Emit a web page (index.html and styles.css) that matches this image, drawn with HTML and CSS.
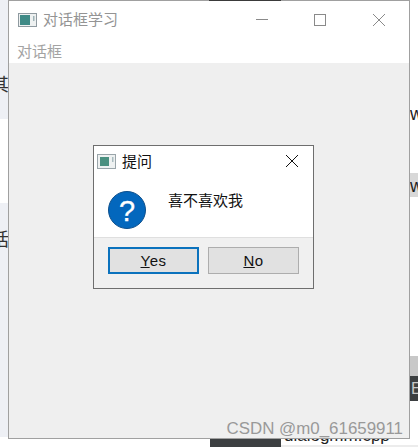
FILE: index.html
```html
<!DOCTYPE html>
<html lang="zh">
<head>
<meta charset="utf-8">
<title>对话框学习</title>
<link rel="stylesheet" href="styles.css">
</head>
<body>
<div class="desk">
  <div class="bg-band bg-left-top"></div>
  <div class="bg-band bg-left-bottom"></div>
  <span class="bg-text bg-char-a">其</span>
  <span class="bg-text bg-char-b">话</span>
  <div class="bg-band bg-top-dark"></div>
  <div class="bg-band bg-right-grey"></div>
  <div class="bg-band bg-right-mid"></div>
  <div class="bg-band bg-right-dark"></div>
  <span class="bg-text bg-e">E</span>
  <span class="bg-text bg-w1">w</span>
  <span class="bg-text bg-w2">w</span>
  <div class="bg-band bg-bottom-dark"></div>
  <div class="bg-band bg-bottom-line"></div>
  <span class="bg-text bg-file">dialogmm.cpp</span>

  <main class="window">
    <header class="titlebar">
      <svg class="app-icon" width="19" height="14" viewBox="0 0 19 14"><rect x="0.5" y="0.5" width="18" height="13" fill="#eef1f1" stroke="#8f9aa0"/><rect x="2" y="2" width="10" height="10" fill="#3f8a86"/><rect x="15" y="3" width="1.5" height="5" fill="#9fb4b8"/></svg>
      <span class="window-title">对话框学习</span>
      <div class="caption">
        <svg class="cap-btn" width="18" height="14" viewBox="0 0 18 14"><path d="M3 6.5h12" stroke="#8a8a8a" fill="none"/></svg>
        <svg class="cap-btn" width="14" height="14" viewBox="0 0 14 14"><rect x="1.5" y="1.5" width="11" height="11" fill="none" stroke="#8a8a8a"/></svg>
        <svg class="cap-btn" width="17" height="14" viewBox="0 0 17 14"><path d="M4 1l12 12M16 1L4 13" stroke="#8a8a8a" fill="none"/></svg>
      </div>
    </header>
    <nav class="menubar">对话框</nav>
    <section class="client">
      <div class="dialog">
        <header class="dlg-title">
          <svg class="app-icon" width="19" height="15" viewBox="0 0 19 15"><rect x="0.5" y="0.5" width="18" height="14" fill="#eef1f1" stroke="#9aa5aa"/><rect x="3" y="3" width="9" height="9" fill="#4a9080"/><rect x="15" y="3" width="1.5" height="5" fill="#a9bcc0"/></svg>
          <span class="dlg-name">提问</span>
          <svg class="dlg-close" width="14" height="14" viewBox="0 0 14 14"><path d="M1 1l12 12M13 1L1 13" stroke="#111" fill="none"/></svg>
        </header>
        <div class="dlg-body">
          <svg class="q-icon" width="38" height="38" viewBox="0 0 38 38"><circle cx="19" cy="19" r="18.5" fill="#0367bd" stroke="#0d4f8c"/><text x="19" y="29.500" text-anchor="middle" class="q-mark">?</text></svg>
          <p class="dlg-text">喜不喜欢我</p>
        </div>
        <footer class="dlg-foot">
          <button class="btn btn-default"><u>Y</u>es</button>
          <button class="btn"><u>N</u>o</button>
        </footer>
      </div>
    </section>
  </main>
  <span class="watermark">CSDN @m0_61659911</span>
</div>
</body>
</html>
```
FILE: styles.css
```css
html, body { margin: 0; padding: 0; }
body { width: 418px; height: 447px; overflow: hidden; background: #fff; font-family: "Noto Sans CJK SC", "Liberation Sans", sans-serif; }
.desk { position: relative; width: 418px; height: 447px; overflow: hidden; background: #fff; }
.bg-band { position: absolute; }
.bg-left-top { left: 0; top: 0; width: 8px; height: 119px; background: #eef0f5; }
.bg-left-bottom { left: 0; top: 203px; width: 8px; height: 234px; background: #eef0f5; }
.bg-top-dark { left: 209px; top: 0; width: 72px; height: 1px; background: #3a3a3a; z-index: 2; }
.bg-right-grey { left: 410px; top: 173px; width: 8px; height: 24px; background: #d8d8d8; }
.bg-right-mid { left: 410px; top: 356px; width: 8px; height: 20px; background: #c8c8c8; }
.bg-right-dark { left: 410px; top: 376px; width: 8px; height: 25px; background: #3c3f41; }
.bg-bottom-dark { left: 210px; top: 439px; width: 71px; height: 8px; background: #3c3f41; }
.bg-bottom-line { left: 281px; top: 445px; width: 137px; height: 2px; background: #ececec; }
.bg-text { position: absolute; color: #333; }
.bg-char-a { left: -9px; top: 71px; font-size: 18px; line-height: 24px; }
.bg-char-b { left: -9px; top: 226px; font-size: 18px; line-height: 24px; }
.bg-w1 { left: 410px; top: 104px; font: 18px/20px "Liberation Sans", sans-serif; color: #222; }
.bg-w2 { left: 410px; top: 176px; font: 18px/20px "Liberation Sans", sans-serif; color: #222; }
.bg-e { left: 411px; top: 379px; font: 16px/20px "Liberation Sans", sans-serif; color: #c8c8c8; }
.bg-file { left: 284px; top: 425px; font: 17px/22px "Liberation Sans", sans-serif; color: #222; }
.window { position: absolute; left: 8px; top: 0; width: 400px; height: 437px; display: flex; flex-direction: column; background: #fff; border: 1px solid #a0a0a0; z-index: 1; }
.titlebar { height: 37px; flex: none; display: flex; align-items: center; padding: 0 0 0 9px; box-sizing: border-box; }
.app-icon { flex: none; }
.window-title { margin-left: 6px; font-size: 15px; line-height: 20px; margin-top: -2px; color: #949494; }
.caption { margin-left: auto; display: flex; align-items: center; gap: 42px; padding-right: 23px; }
.cap-btn { display: block; }
.menubar { height: 25px; flex: none; box-sizing: border-box; padding-left: 8px; font-size: 15px; line-height: 25px; color: #a3a3a3; }
.client { flex: 1; background: #efefef; position: relative; }
.dialog { position: absolute; left: 84px; top: 82px; width: 219px; height: 142px; display: flex; flex-direction: column; background: #fff; border: 1px solid #6e6e6e; }
.dlg-title { height: 30px; flex: none; display: flex; align-items: center; padding: 0 14px 0 3px; box-sizing: border-box; }
.dlg-name { margin-left: 6px; font-size: 15px; line-height: 20px; color: #111; }
.dlg-close { margin-left: auto; }
.dlg-body { flex: 1; display: flex; align-items: flex-start; padding: 15px 0 0 14px; }
.q-icon { flex: none; }
.q-mark { font: 29px "Liberation Sans", sans-serif; fill: #fff; stroke: #fff; stroke-width: 0.3px; }
.dlg-text { margin: -1px 0 0 22px; font-size: 15px; line-height: 20px; color: #111; }
.dlg-foot { height: 51px; flex: none; display: flex; gap: 9px; align-items: flex-start; box-sizing: border-box; padding: 9px 0 0 14px; background: #f0f0f0; border-top: 1px solid #dfdfdf; }
.btn { width: 91px; height: 27px; padding: 0; background: #e1e1e1; border: 1px solid #adadad; color: #111; font: 15px "Liberation Sans", sans-serif; letter-spacing: 0.5px; }
.btn-default { border: 2px solid #0b72bd; }
.watermark { position: absolute; right: 15px; top: 419px; z-index: 2; font: 16.9px/20px "Liberation Sans", sans-serif; color: #999; }
```
